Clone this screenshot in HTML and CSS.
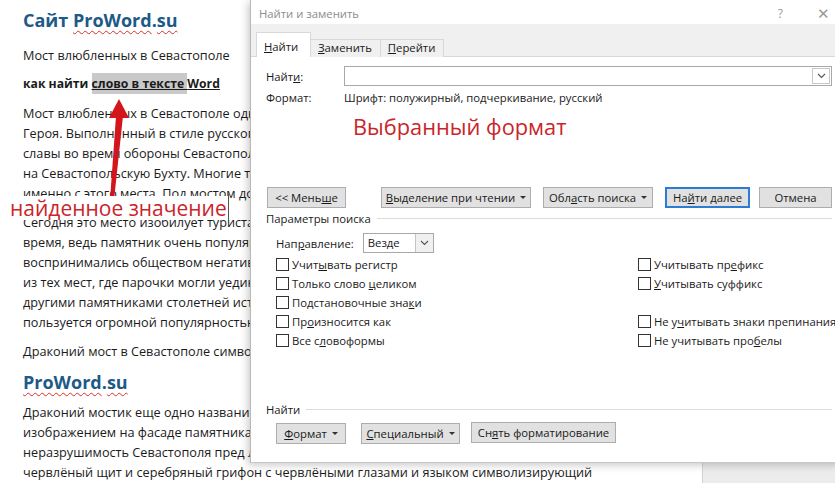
FILE: index.html
```html
<!DOCTYPE html>
<html lang="ru">
<head>
    <meta charset="UTF-8">
    <title>Найти и заменить</title>
    <link rel="stylesheet" href="styles.css">
</head>
<body>
    <div class="page">
        <div class="doc">
            <h1 class="doc-title">Сайт <span class="spell">ProWord</span>.<span class="spell">su</span></h1>
            <p>Мост влюбленных в Севастополе</p>
            <p class="strong">как найти <span class="link"><span class="found">слово в тексте </span>Word</span></p>
            <p>Мост влюбленных в Севастополе одно из самых романтичных мест города-<br>
            Героя. Выполненный в стиле русского классицизма, он напоминает о днях<br>
            славы во время обороны Севастополя и открывает прекрасный вид<br>
            на Севастопольскую Бухту. Многие туристы начинают знакомство с городом<br>
            именно с этого места. Под мостом до сих пор плещутся волны.</p>
            <p>Сегодня это место изобилует туристами в любое время года и в любое<br>
            время, ведь памятник очень популярен у молодоженов. Когда-то такие встречи<br>
            воспринимались обществом негативно, но мост всегда оставался одним<br>
            из тех мест, где парочки могли уединиться. Вместе с<br>
            другими памятниками столетней истории мост и сегодня<br>
            пользуется огромной популярностью у гостей города.</p>
            <p>Драконий мост в Севастополе символизирует силу и мощь города.</p>
            <h2 class="doc-title"><span class="spell">ProWord</span>.<span class="spell">su</span></h2>
            <p>Драконий мостик еще одно название моста, связанное с его<br>
            изображением на фасаде памятника, которое олицетворяет<br>
            неразрушимость Севастополя пред лицом врагов. На гербе изображён<br>
            червлёный щит и серебряный грифон с червлёными глазами и языком символизирующий</p>
        </div>
        <div class="side"></div>
    </div>

    <svg class="arrow" width="250" height="240" viewBox="0 0 250 240">
        <polygon points="119,99 109,118 129,118" fill="#d3161c"/>
        <polygon points="116,116 123,116 114,200 110,200" fill="#d3161c"/>
    </svg>
    <div class="note note-found"><span class="caret">найденное значение</span></div>

    <div class="dialog">
        <div class="titlebar">
            <span class="title">Найти и заменить</span>
            <span class="title-btns"><span class="help">?</span><span class="close">&#x2715;</span></span>
        </div>
        <div class="tabstrip">
            <div class="tab active"><u>Н</u>айти</div>
            <div class="tab"><u>З</u>аменить</div>
            <div class="tab"><u>П</u>ерейти</div>
        </div>
        <div class="dlg-body">
            <div class="find-row">
                <span class="field-label">Найт<u>и</u>:</span>
                <div class="combo combo-wide">
                    <span class="combo-text"></span>
                    <span class="combo-arrow"><svg width="9" height="6" viewBox="0 0 9 6"><polyline points="1,1 4.5,4.5 8,1" fill="none" stroke="#555" stroke-width="1.1"/></svg></span>
                </div>
            </div>
            <div class="format-row">
                <span class="field-label">Формат:</span>
                <span>Шрифт: полужирный, подчеркивание, русский</span>
            </div>

            <div class="btn-row">
                <button class="btn btn-less"><span>&lt;&lt; Мень<u>ш</u>е</span></button>
                <button class="btn btn-read"><span><u>В</u>ыделение при чтении</span><i class="tri"></i></button>
                <button class="btn btn-area"><span>Обл<u>а</u>сть поиска</span><i class="tri"></i></button>
                <button class="btn btn-next"><span>На<u>й</u>ти далее</span></button>
                <button class="btn btn-cancel"><span>Отмена</span></button>
            </div>

            <div class="group-head"><span>Параметры поиска</span><span class="rule"></span></div>
            <div class="dir-row">
                <span>Нап<u>р</u>авление:</span>
                <div class="combo combo-dir">
                    <span class="combo-text">Везде</span>
                    <span class="combo-arrow"><svg width="9" height="6" viewBox="0 0 9 6"><polyline points="1,1 4.5,4.5 8,1" fill="none" stroke="#555" stroke-width="1.1"/></svg></span>
                </div>
            </div>
            <div class="options">
                <div class="opt-col opt-left">
                    <label class="opt"><span class="box"></span><span>Учит<u>ы</u>вать регистр</span></label>
                    <label class="opt"><span class="box"></span><span>Только слово <u>ц</u>еликом</span></label>
                    <label class="opt"><span class="box"></span><span>Подстановочные зна<u>к</u>и</span></label>
                    <label class="opt"><span class="box"></span><span>Пр<u>о</u>износится как</span></label>
                    <label class="opt"><span class="box"></span><span>Все с<u>л</u>овоформы</span></label>
                </div>
                <div class="opt-col">
                    <label class="opt"><span class="box"></span><span>Учитывать пр<u>е</u>фикс</span></label>
                    <label class="opt"><span class="box"></span><span><u>У</u>читывать суффикс</span></label>
                    <div class="opt"></div>
                    <label class="opt"><span class="box"></span><span>Не у<u>ч</u>итывать знаки препинания</span></label>
                    <label class="opt"><span class="box"></span><span>Не учитывать про<u>б</u>елы</span></label>
                </div>
            </div>

            <div class="group-head group-find"><span>Найти</span><span class="rule"></span></div>
            <div class="btn-row btn-row-bottom">
                <button class="btn btn-format"><span><u>Ф</u>ормат</span><i class="tri"></i></button>
                <button class="btn btn-special"><span><u>С</u>пециальный</span><i class="tri"></i></button>
                <button class="btn btn-clear"><span>Сн<u>я</u>ть форматирование</span></button>
            </div>
        </div>
        <div class="note note-format">Выбранный формат</div>
    </div>
</body>
</html>
```

FILE: styles.css
```css
body {
    margin: 0;
    width: 835px;
    height: 483px;
    overflow: hidden;
    position: relative;
    background-color: #fff;
    font-family: "Open Sans", sans-serif;
}
.page {
    display: flex;
    height: 483px;
}
.doc {
    width: 702px;
    padding: 8px 0 0 23px;
    box-sizing: border-box;
    font-size: 12.7px;
    line-height: 20px;
    color: #1b1b1b;
    white-space: nowrap;
    overflow: hidden;
}
.side {
    flex: 1;
    background-color: #ececec;
    border-left: 1px solid #d2d2d2;
}
.doc p {
    margin: 0 0 9px;
}
.doc-title {
    font-size: 18px;
    line-height: 24px;
    font-weight: bold;
    color: #1e5a87;
    margin: 0 0 13px;
}
h2.doc-title {
    margin: 0 0 8px;
}
.spell {
    text-decoration: underline wavy #d9302c;
    text-decoration-thickness: 1px;
    text-underline-offset: 3px;
}
.strong {
    font-weight: bold;
    font-size: 12.2px;
}
.link {
    text-decoration: underline;
}
.found {
    background-color: #c9c9c9;
    padding: 2px 0;
}

/* annotations */
.arrow {
    position: absolute;
    left: 0;
    top: 0;
}
.note {
    position: absolute;
    color: #c9252b;
    font-family: "Open Sans", sans-serif;
    font-size: 21px;
    line-height: 24px;
    white-space: nowrap;
}
.note-found {
    left: 0;
    top: 196px;
    width: 228px;
    padding-left: 10px;
    box-sizing: border-box;
    background-color: #fff;
}
.caret {
    border-right: 1px solid #555;
    padding-right: 1px;
}
.note-format {
    left: 102px;
    top: 115px;
    font-size: 21.8px;
}

/* dialog */
.dialog {
    position: absolute;
    left: 250px;
    top: 0;
    width: 590px;
    height: 462px;
    background-color: #fff;
    border-left: 1px solid #b8b8b8;
    border-bottom: 1px solid #c8c8c8;
    box-shadow: -2px 2px 8px rgba(0,0,0,0.22);
    font-size: 11.3px;
    color: #1a1a1a;
}
.titlebar {
    height: 24px;
    display: flex;
    align-items: center;
    justify-content: space-between;
    padding: 2px 0 0 8px;
    box-sizing: border-box;
}
.title {
    color: #8c8c8c;
}
.title-btns {
    display: flex;
    align-items: center;
    gap: 34px;
    padding-right: 11px;
    color: #9a9a9a;
}
.help {
    font-size: 12px;
}
.close {
    font-size: 15px;
    font-weight: 300;
}
.tabstrip {
    height: 32px;
    background-color: #f0f0f0;
    border-bottom: 1px solid #d8d8d8;
    display: flex;
    align-items: flex-end;
    padding-left: 5px;
}
.tab {
    height: 17px;
    padding: 0 8px 0 7px;
    border: 1px solid #d8d8d8;
    border-bottom: none;
    border-left: none;
    line-height: 16px;
    margin-bottom: -1px;
    background-color: #f0f0f0;
}
.tab.active {
    width: 46px;
    height: 24px;
    padding: 0 0 0 7px;
    border-left: 1px solid #d8d8d8;
    background-color: #fff;
    line-height: 27px;
}
.dlg-body {
    padding: 9px 9px 0 15px;
}
.find-row, .format-row {
    display: flex;
    align-items: center;
}
.field-label {
    width: 78px;
    flex: none;
}
.format-row {
    height: 16px;
    margin-top: 3px;
}
.combo {
    display: flex;
    height: 20px;
    border: 1px solid #a8a8a8;
    box-sizing: border-box;
    background-color: #fff;
}
.combo-wide {
    flex: 1;
}
.combo-text {
    flex: 1;
    line-height: 18px;
    padding-left: 4px;
}
.combo-arrow {
    width: 16px;
    display: flex;
    align-items: center;
    justify-content: center;
    background-color: #f0f0f0;
    border-left: 1px solid #c4c4c4;
}
.combo-wide .combo-arrow {
    background-color: #fff;
    border: 1px solid #c8c8c8;
    margin: 1px;
}
.btn-row {
    display: flex;
    margin-top: 82px;
}
.btn {
    height: 21px;
    padding: 0;
    border: 1px solid #adadad;
    background-color: #e1e1e1;
    font-family: "Open Sans", sans-serif;
    font-size: 11.3px;
    color: #1a1a1a;
    display: flex;
    align-items: center;
    justify-content: center;
    gap: 5px;
}
.tri {
    width: 0;
    height: 0;
    border-left: 3px solid transparent;
    border-right: 3px solid transparent;
    border-top: 3px solid #333;
}
.btn-less { width: 79px; margin-left: 1px; }
.btn-read { width: 150px; margin-left: 35px; }
.btn-area { width: 110px; margin-left: 12px; }
.btn-next { width: 85px; margin-left: 12px; border: 2px solid #2b7cd3; }
.btn-cancel { width: 73px; margin-left: 9px; }
.group-head {
    display: flex;
    align-items: center;
    gap: 6px;
    height: 16px;
    margin-top: 2px;
}
.rule {
    flex: 1;
    border-top: 1px solid #dcdcdc;
}
.dir-row {
    display: flex;
    align-items: center;
    gap: 9px;
    margin-top: 7px;
    padding-left: 10px;
}
.combo-dir {
    width: 71px;
}
.combo-dir .combo-arrow {
    width: 17px;
}
.options {
    display: flex;
    margin-top: 2px;
    padding-left: 10px;
}
.opt-left {
    width: 362px;
    flex: none;
}
.opt {
    height: 19px;
    display: flex;
    align-items: center;
    gap: 3px;
    white-space: nowrap;
}
.box {
    width: 11px;
    height: 11px;
    border: 1px solid #333;
    background-color: #fff;
    flex: none;
}
.group-find {
    margin-top: 51px;
}
.btn-row-bottom {
    margin-top: 6px;
    padding-left: 10px;
}
.btn-format { width: 70px; }
.btn-special { width: 99px; margin-left: 15px; }
.btn-clear { width: 145px; margin-left: 11px; margin-top: -1px; }
```
